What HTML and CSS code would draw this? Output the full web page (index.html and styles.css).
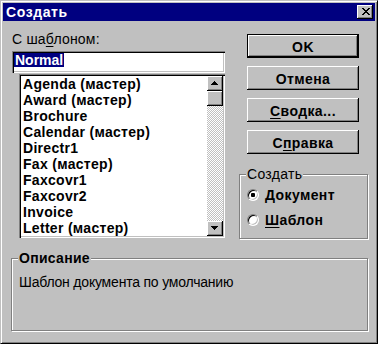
FILE: index.html
```html
<!DOCTYPE html>
<html>
<head>
<meta charset="utf-8">
<link rel="stylesheet" href="styles.css">
</head>
<body>
<div class="window">
  <div class="titlebar">
    <span class="title">Создать</span>
    <span class="close"><svg width="8" height="7" viewBox="0 0 8 7" shape-rendering="crispEdges"><path d="M0 0h2v1H0zM6 0h2v1H6zM1 1h2v1H1zM5 1h2v1H5zM2 2h4v1H2zM3 3h2v1H3zM2 4h4v1H2zM1 5h2v1H1zM5 5h2v1H5zM0 6h2v1H0zM6 6h2v1H6z" fill="#000"/></svg></span>
  </div>
  <div class="content">
    <div class="main">
      <div class="left">
        <div class="label">С ша<u>б</u>лоном:</div>
        <div class="textbox"><span class="sel">Normal</span></div>
        <div class="listbox">
          <ul class="items">
            <li>Agenda (мастер)</li>
            <li>Award (мастер)</li>
            <li>Brochure</li>
            <li>Calendar (мастер)</li>
            <li>Directr1</li>
            <li>Fax (мастер)</li>
            <li>Faxcovr1</li>
            <li>Faxcovr2</li>
            <li>Invoice</li>
            <li>Letter (мастер)</li>
          </ul>
          <div class="scrollbar">
            <div class="sbtn"><svg width="7" height="4" viewBox="0 0 7 4" shape-rendering="crispEdges"><path d="M3 0h1v1h1v1h1v1h1v1H0V3h1V2h1V1h1z" fill="#000"/></svg></div>
            <div class="sbtn thumb"></div>
            <div class="track"></div>
            <div class="sbtn"><svg width="7" height="4" viewBox="0 0 7 4" shape-rendering="crispEdges"><path d="M0 0h7v1H6v1H5v1H4v1H3V3H2V2H1V1H0z" fill="#000"/></svg></div>
          </div>
        </div>
      </div>
      <div class="right">
        <div class="btns">
          <button class="btn default">OK</button>
          <button class="btn">Отмена</button>
          <button class="btn"><u>С</u>водка...</button>
          <button class="btn">С<u>п</u>равка</button>
        </div>
        <fieldset class="group create">
          <legend>Создать</legend>
          <div class="radios">
            <div class="radio-row"><span class="radio checked"></span><span class="rlabel"><u>Д</u>окумент</span></div>
            <div class="radio-row"><span class="radio"></span><span class="rlabel"><u>Ш</u>аблон</span></div>
          </div>
        </fieldset>
      </div>
    </div>
    <fieldset class="group desc">
      <legend class="bold">Описание</legend>
      <div class="desc-text">Шаблон документа по умолчанию</div>
    </fieldset>
  </div>
</div>
</body>
</html>
```

FILE: styles.css
```css
* { box-sizing: border-box; }
html, body { margin: 0; padding: 0; }
body {
  width: 378px;
  height: 344px;
  background: #c0c0c0;
  font-family: "Liberation Sans", Arial, sans-serif;
  font-size: 14px;
  color: #000;
  overflow: hidden;
}
u { text-decoration: underline; text-underline-offset: 2px; }

.window {
  width: 378px;
  height: 344px;
  background: #c0c0c0;
  border: 1px solid;
  border-color: #c0c0c0 #000 #000 #c0c0c0;
  box-shadow: inset 1px 1px #fff, inset -1px -1px #808080;
  padding: 2px;
  display: flex;
  flex-direction: column;
}

.titlebar {
  height: 18px;
  flex: none;
  background: #000080;
  display: flex;
  align-items: center;
  justify-content: space-between;
  padding: 0 2px 0 3px;
}
.title {
  color: #fff;
  font-weight: bold;
  letter-spacing: 0.6px;
  line-height: 18px;
}
.close {
  width: 16px;
  height: 14px;
  background: #c0c0c0;
  box-shadow: inset -1px -1px #000, inset 1px 1px #fff, inset -2px -2px #808080;
  display: flex;
  align-items: center;
  justify-content: center;
  padding: 0 0 1px 1px;
}
.close svg { display: block; }

.content { display: flex; flex-direction: column; }
.main { display: flex; align-items: flex-start; padding-left: 9px; }

.left { width: 213px; display: flex; flex-direction: column; }
.label { margin-top: 10px; height: 16px; line-height: 16px; letter-spacing: 0.2px; }

.textbox {
  margin-top: 4px;
  height: 22px;
  background: #fff;
  box-shadow: inset 1px 1px #808080, inset 2px 2px #000, inset -1px -1px #fff, inset -2px -2px #c0c0c0;
  padding: 2px;
}
.sel {
  display: inline-block;
  vertical-align: top;
  background: #000080;
  color: #fff;
  font-weight: bold;
  height: 14px;
  line-height: 14px;
  padding: 0 1px;
}

.listbox {
  margin-top: 1px;
  margin-left: 7px;
  width: 206px;
  height: 164px;
  background: #fff;
  box-shadow: inset 1px 1px #808080, inset 2px 2px #000, inset -1px -1px #fff, inset -2px -2px #c0c0c0;
  padding: 2px;
  display: flex;
}
.items {
  list-style: none;
  margin: 0;
  padding: 0 0 0 2px;
  flex: 1;
  font-weight: bold;
  letter-spacing: 0.3px;
  line-height: 16px;
  overflow: hidden;
  white-space: nowrap;
}
.scrollbar { width: 16px; display: flex; flex-direction: column; }
.sbtn {
  height: 15px;
  flex: none;
  background: #c0c0c0;
  box-shadow: inset -1px -1px #000, inset 1px 1px #fff, inset -2px -2px #808080;
  display: flex;
  align-items: center;
  justify-content: center;
  padding: 0 1px 1px 0;
}
.sbtn svg { display: block; }
.track {
  flex: 1;
  background: repeating-conic-gradient(#fff 0 25%, #c0c0c0 0 50%) 0 0 / 2px 2px;
}

.right { margin-left: 14px; width: 129px; display: flex; flex-direction: column; }
.btns { margin-top: 13px; display: flex; flex-direction: column; gap: 8px; padding-left: 8px; }
.btn {
  appearance: none;
  border: 0;
  margin: 0;
  width: 112px;
  height: 24px;
  background: #c0c0c0;
  font-family: inherit;
  font-size: 14px;
  font-weight: bold;
  letter-spacing: 0.4px;
  color: #000;
  text-align: center;
  padding: 3px 0 0 0;
  line-height: 21px;
  box-shadow: inset -1px -1px #000, inset 1px 1px #fff, inset -2px -2px #808080;
}
.btn.default {
  border: 1px solid #000;
  padding-top: 2px;
}

.group {
  margin: 0;
  padding: 0;
  min-width: 0;
  border: 1px solid #808080;
  box-shadow: inset 1px 1px #fff, 1px 1px #fff;
}
.group legend {
  padding: 0 1px;
  margin-left: 6px;
  line-height: 14px;
  background: #c0c0c0;
  letter-spacing: 0.3px;
}
.group legend.bold { font-weight: bold; }

.create { margin-top: 13px; }
.radios { padding: 1px 0 6px 7px; }
.radio-row { height: 25px; display: flex; align-items: center; }
.radio {
  width: 12px;
  height: 12px;
  border-radius: 50%;
  border: 1px solid;
  border-color: #808080 #fff #fff #808080;
  box-shadow: inset 1px 1px #000, inset -1px -1px #c0c0c0;
  background: #fff;
  display: flex;
  align-items: center;
  justify-content: center;
  margin-right: 6px;
}
.radio.checked::after {
  content: "";
  width: 4px;
  height: 4px;
  border-radius: 1px;
  background: #000;
}
.rlabel { font-weight: bold; letter-spacing: 0.4px; line-height: 16px; padding-top: 1px; }

.desc {
  margin: 12px 0 0 8px;
  width: 357px;
}
.desc-text { padding: 9px 0 40px 7px; line-height: 16px; letter-spacing: -0.2px; }
```
